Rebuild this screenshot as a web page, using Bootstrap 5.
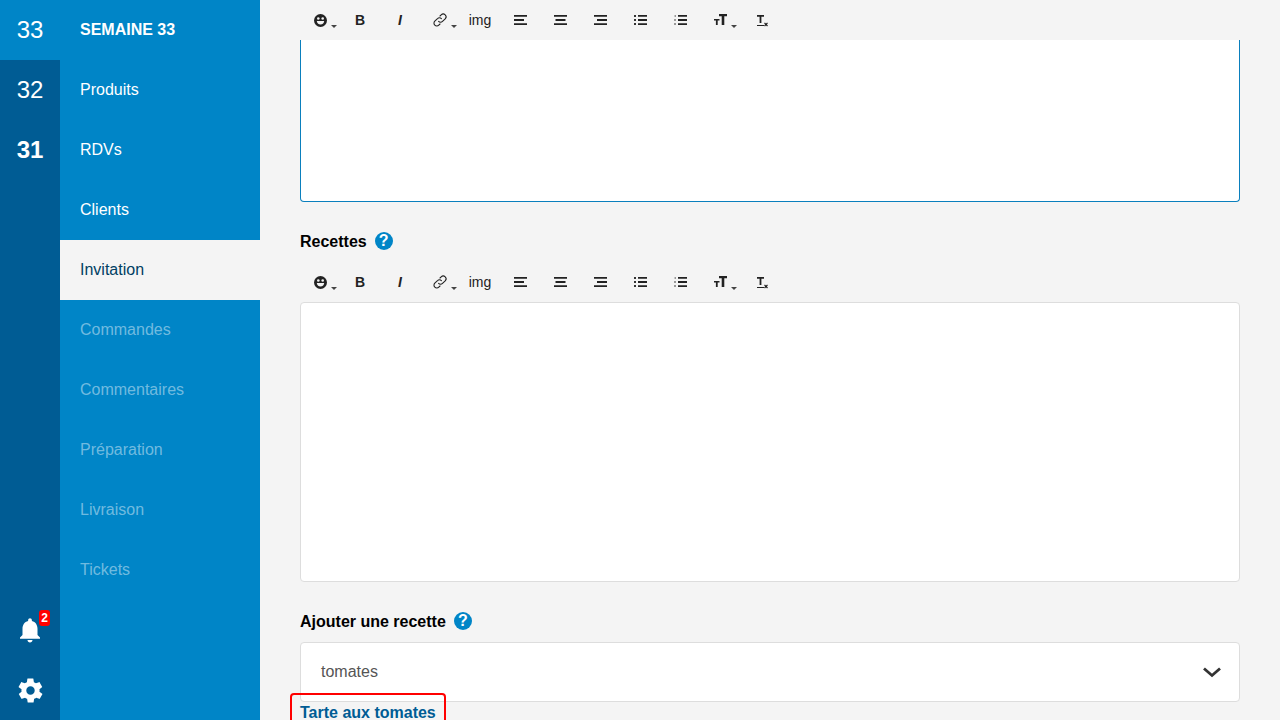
<!DOCTYPE html>
<html lang="fr">
<head>
<meta charset="utf-8">
<title>Semaine 33</title>
<link href="https://cdn.jsdelivr.net/npm/bootstrap@5.3.0/dist/css/bootstrap.min.css" rel="stylesheet">
<style>
html,body{height:720px;overflow:hidden}
body{background:#f4f4f4;font-family:"Liberation Sans",Arial,sans-serif;color:#000}
.shell{height:720px}
.rail{width:60px;background:#005c94;flex:none}
.rail-item{height:60px;color:#fff;font-size:24px;line-height:60px;text-align:center}
.rail-item.on{background:#0085c7}
.rail-item.strong{font-weight:700}
.rail-icon{height:60px;position:relative}
.pill{position:absolute;left:39px;top:10px;width:11px;height:16px;background:#f00;color:#fff;font-size:12px;font-weight:700;line-height:16px;text-align:center;border-radius:3px}
.menu{width:200px;background:#0085c7;flex:none}
.menu-item{height:60px;line-height:60px;padding-left:20px;font-size:16px;color:#fff}
.menu-item.head{font-weight:700}
.menu-item.sel{background:#f4f4f4;color:#003f63}
.menu-item.off{color:rgba(255,255,255,.45)}
.work{flex:1;padding:0 40px;min-width:0;position:relative}
.bar{height:40px}
.tool{width:40px;height:40px;flex:none;position:relative;color:#222;font-size:14px;line-height:40px;text-align:center}
.tool.bold{font-weight:700}
.tool.ital{font-weight:700;font-style:italic}
.tool svg{position:absolute;left:12px;top:12px}
.tool.caret::after{content:"";position:absolute;left:31px;top:25px;border:3px solid transparent;border-top-color:#444;border-bottom:0}
.edit{background:#fff;border:1px solid #ddd;border-radius:4px}
.edit.first{height:162px;border:1px solid #0a7fbd;border-top:0;border-radius:0 0 4px 4px}
.edit.second{height:280px}
.lbl{font-size:16px;font-weight:700;height:21px;line-height:21px;gap:8px}
.lbl-a{margin-top:29px;margin-bottom:10px}
.lbl-b{margin-top:29px;margin-bottom:10px}
.help{width:18px;height:18px;margin-bottom:2px;border-radius:50%;background:#0085c7;color:#fff;font-size:16px;font-weight:700;line-height:18px;text-align:center}
.pick{height:60px;background:#fff;border:1px solid #ddd;border-radius:4px;padding:0 17px 0 20px;font-size:16px;color:#555}
.hit{position:absolute;left:30px;top:693px;width:156px;height:40px;border:2px solid #f00;border-radius:4px;padding:7px 8px;font-size:16px;font-weight:700;line-height:21px;color:#005c94;white-space:nowrap}
</style>
</head>
<body>
<svg width="0" height="0" class="position-absolute">
<defs>
<symbol id="i-smile" viewBox="0 0 16 16"><circle cx="8.500" cy="8.500" r="6.500" fill="#222"/><circle cx="6.300" cy="6.500" r="1.300" fill="#f4f4f4"/><circle cx="10.700" cy="6.500" r="1.300" fill="#f4f4f4"/><path d="M4.800 9h7.400c0 2-1.600 3.400-3.700 3.400S4.800 11 4.800 9z" fill="#f4f4f4"/></symbol>
<symbol id="i-link" viewBox="0 0 16 16"><g fill="none" stroke="#222" stroke-width="1.100" stroke-linecap="round"><path d="M6.600 9.400a2.700 2.700 0 0 0 3.900 0l2.700-2.600a2.800 2.800 0 0 0-4-4L8 4"/><path d="M9.400 6.600a2.700 2.700 0 0 0-3.900 0L2.800 9.200a2.800 2.800 0 0 0 4 4L8 12"/></g></symbol>
<symbol id="i-left" viewBox="0 0 16 16"><path d="M2 3h13v1.800H2zM2 7.100h10v1.800H2zM2 11.200h13V13H2z" fill="#222"/></symbol>
<symbol id="i-center" viewBox="0 0 16 16"><path d="M2 3h13v1.800H2zM3.500 7.100h10v1.800h-10zM2 11.200h13V13H2z" fill="#222"/></symbol>
<symbol id="i-right" viewBox="0 0 16 16"><path d="M2 3h13v1.800H2zM5 7.100h10v1.800H5zM2 11.200h13V13H2z" fill="#222"/></symbol>
<symbol id="i-ul" viewBox="0 0 16 16"><path d="M6 3h9v1.800H6zM6 7.100h9v1.800H6zM6 11.200h9V13H6z" fill="#222"/><path d="M2 3h2v2H2zM2 7h2v2H2zM2 11h2v2H2z" fill="#333"/></symbol>
<symbol id="i-ol" viewBox="0 0 16 16"><path d="M6 3h9v1.800H6zM6 7.100h9v1.800H6zM6 11.200h9V13H6z" fill="#222"/><path d="M2.500 3h1.500v2H2.500zM2 7h2v2H2zM2 11h2v2H2z" fill="#999"/></symbol>
<symbol id="i-size" viewBox="0 0 16 16"><path d="M7 2h8v2.300h-2.700V13H9.700V4.300H7z" fill="#222"/><path d="M2 7h5.500v1.600H5.700V13H3.900V8.600H2z" fill="#222"/></symbol>
<symbol id="i-clear" viewBox="0 0 16 16"><path d="M5 3h7v1.700H9.400V11H7.600V4.700H5z" fill="#222"/><path d="M5 13h7v1H5z" fill="#222"/><path d="M12.500 10.800l3 3.200M15.500 10.800l-3 3.200" stroke="#222" stroke-width="1.200"/></symbol>
</defs>
</svg>
<div class="shell d-flex">
  <nav class="rail d-flex flex-column">
    <div class="rail-item on">33</div>
    <div class="rail-item">32</div>
    <div class="rail-item strong">31</div>
    <div class="flex-grow-1"></div>
    <div class="rail-icon d-flex align-items-center justify-content-center">
      <svg width="30" height="30" viewBox="0 0 24 24" fill="#fff"><path d="M12 22c1.100 0 2-.9 2-2h-4c0 1.100.9 2 2 2zm6-6v-5c0-3.100-1.600-5.600-4.500-6.300V4c0-.8-.7-1.500-1.500-1.500s-1.500.7-1.500 1.500v.7C7.600 5.400 6 7.900 6 11v5l-2 2v1h16v-1l-2-2z"/></svg>
      <span class="pill">2</span>
    </div>
    <div class="rail-icon d-flex align-items-center justify-content-center">
      <svg width="29" height="29" viewBox="0 0 24 24" fill="#fff"><path d="M19.400 13c0-.3.100-.6.100-1s0-.7-.1-1l2.100-1.600c.2-.2.200-.4.100-.6l-2-3.500c-.1-.2-.4-.3-.6-.2l-2.500 1c-.5-.4-1.100-.7-1.700-1l-.4-2.600c0-.3-.2-.4-.5-.4h-4c-.3 0-.5.100-.5.400l-.4 2.600c-.6.300-1.200.6-1.700 1l-2.500-1c-.2-.1-.5 0-.6.200l-2 3.500c-.1.200-.1.400.1.600L4.600 11c0 .3-.1.700-.1 1s0 .7.1 1l-2.100 1.600c-.2.200-.2.400-.1.600l2 3.500c.1.200.4.300.6.200l2.500-1c.5.400 1.100.7 1.700 1l.4 2.600c0 .3.200.4.500.4h4c.3 0 .5-.1.500-.4l.4-2.600c.6-.3 1.200-.6 1.700-1l2.500 1c.2.100.5 0 .6-.2l2-3.500c.1-.2.1-.4-.1-.6L19.400 13zM12 15.500c-1.900 0-3.500-1.600-3.500-3.500s1.600-3.500 3.500-3.500 3.500 1.600 3.500 3.500-1.600 3.500-3.500 3.500z"/></svg>
    </div>
  </nav>
  <nav class="menu">
    <div class="menu-item head">SEMAINE 33</div>
    <div class="menu-item">Produits</div>
    <div class="menu-item">RDVs</div>
    <div class="menu-item">Clients</div>
    <div class="menu-item sel">Invitation</div>
    <div class="menu-item off">Commandes</div>
    <div class="menu-item off">Commentaires</div>
    <div class="menu-item off">Préparation</div>
    <div class="menu-item off">Livraison</div>
    <div class="menu-item off">Tickets</div>
  </nav>
  <main class="work">
    <div class="bar d-flex">
      <div class="tool caret"><svg width="16" height="16"><use href="#i-smile"/></svg></div>
      <div class="tool bold">B</div>
      <div class="tool ital">I</div>
      <div class="tool caret"><svg width="16" height="16"><use href="#i-link"/></svg></div>
      <div class="tool">img</div>
      <div class="tool"><svg width="16" height="16"><use href="#i-left"/></svg></div>
      <div class="tool"><svg width="16" height="16"><use href="#i-center"/></svg></div>
      <div class="tool"><svg width="16" height="16"><use href="#i-right"/></svg></div>
      <div class="tool"><svg width="16" height="16"><use href="#i-ul"/></svg></div>
      <div class="tool"><svg width="16" height="16"><use href="#i-ol"/></svg></div>
      <div class="tool caret"><svg width="16" height="16"><use href="#i-size"/></svg></div>
      <div class="tool"><svg width="16" height="16"><use href="#i-clear"/></svg></div>
    </div>
    <div class="edit first"></div>
    <div class="lbl lbl-a d-flex align-items-center">Recettes <span class="help">?</span></div>
    <div class="bar d-flex">
      <div class="tool caret"><svg width="16" height="16"><use href="#i-smile"/></svg></div>
      <div class="tool bold">B</div>
      <div class="tool ital">I</div>
      <div class="tool caret"><svg width="16" height="16"><use href="#i-link"/></svg></div>
      <div class="tool">img</div>
      <div class="tool"><svg width="16" height="16"><use href="#i-left"/></svg></div>
      <div class="tool"><svg width="16" height="16"><use href="#i-center"/></svg></div>
      <div class="tool"><svg width="16" height="16"><use href="#i-right"/></svg></div>
      <div class="tool"><svg width="16" height="16"><use href="#i-ul"/></svg></div>
      <div class="tool"><svg width="16" height="16"><use href="#i-ol"/></svg></div>
      <div class="tool caret"><svg width="16" height="16"><use href="#i-size"/></svg></div>
      <div class="tool"><svg width="16" height="16"><use href="#i-clear"/></svg></div>
    </div>
    <div class="edit second"></div>
    <div class="lbl lbl-b d-flex align-items-center">Ajouter une recette <span class="help">?</span></div>
    <div class="pick d-flex align-items-center justify-content-between">
      <span>tomates</span>
      <svg width="20" height="12" viewBox="0 0 20 12"><path d="M2 2.500l8 7 8-7" fill="none" stroke="#333" stroke-width="2.800"/></svg>
    </div>
    <div class="hit">Tarte aux tomates</div>
  </main>
</div>
</body>
</html>
